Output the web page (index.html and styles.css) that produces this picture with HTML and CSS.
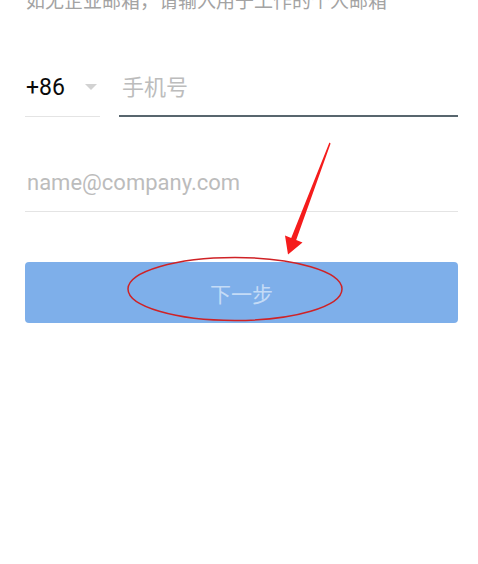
FILE: index.html
```html
<!DOCTYPE html>
<html lang="zh-CN">
<head>
<meta charset="utf-8">
<title>注册</title>
<link rel="stylesheet" href="styles.css">
</head>
<body>
<div class="page">
  <p class="hint">如无企业邮箱，请输入用于工作的个人邮箱</p>
  <div class="phone-row">
    <div class="field code">
      <span class="code-text">+86</span>
      <span class="caret"></span>
    </div>
    <div class="field phone active">
      <span class="placeholder">手机号</span>
    </div>
  </div>
  <div class="field email">
    <span class="placeholder">name@company.com</span>
  </div>
  <button class="next" type="button">下一步</button>
</div>
<svg class="annot" width="478" height="564" viewBox="0 0 478 564" xmlns="http://www.w3.org/2000/svg">
  <polygon points="329.4,142.6 330.6,143.4 296.2,239.9 302.5,242.4 288,254.5 285,235.6 291.2,238.1" fill="#f51c1c"/>
  <ellipse cx="235" cy="289" rx="107" ry="31.5" fill="none" stroke="#cf2226" stroke-width="1.5"/>
</svg>
</body>
</html>
```
FILE: styles.css
```css
html, body {
  margin: 0;
  padding: 0;
  background: #ffffff;
}
body {
  width: 478px;
  height: 564px;
  overflow: hidden;
  position: relative;
  font-family: Roboto, "Noto Sans CJK SC", sans-serif;
}
.page {
  padding: 0 20px 0 25px;
  display: flex;
  flex-direction: column;
}
.hint {
  margin: -10px 0 0 1px;
  font-size: 19px;
  line-height: 19px;
  color: #a3a3a3;
  white-space: nowrap;
  font-family: "Noto Sans CJK SC", sans-serif;
}
.phone-row {
  margin-top: 53px;
  display: flex;
  gap: 19px;
}
.field {
  height: 54px;
  display: flex;
  align-items: center;
  box-sizing: content-box;
  border-bottom: 1px solid #e4e4e4;
}
.code {
  width: 75px;
  flex: none;
}
.code-text {
  font-size: 23px;
  color: #0a0a0a;
  margin-left: 1px;
  margin-top: -3px;
}
.caret {
  margin-left: 20px;
  width: 0;
  height: 0;
  border-left: 6.5px solid transparent;
  border-right: 6.5px solid transparent;
  border-top: 6px solid #d2d2d2;
  margin-top: -5px;
}
.phone {
  flex: 1;
  border-bottom: 2px solid #58666e;
  height: 53px;
}
.placeholder {
  font-size: 22px;
  color: #bcbcbc;
  margin-left: 3px;
  white-space: nowrap;
}
.phone .placeholder {
  font-family: "Noto Sans CJK SC", sans-serif;
  font-size: 22px;
  margin-left: 3px;
  margin-top: -7px;
}
.email {
  margin-top: 40px;
}
.email .placeholder {
  margin-left: 2px;
  margin-top: -4px;
}
.next {
  margin-top: 50px;
  height: 61px;
  border: none;
  border-radius: 4px;
  background: #7eafea;
  color: #c4dbf6;
  font-family: "Noto Sans CJK SC", sans-serif;
  font-size: 21px;
  padding: 0;
  width: 100%;
}
.annot {
  position: absolute;
  top: 0;
  left: 0;
  pointer-events: none;
}
```
